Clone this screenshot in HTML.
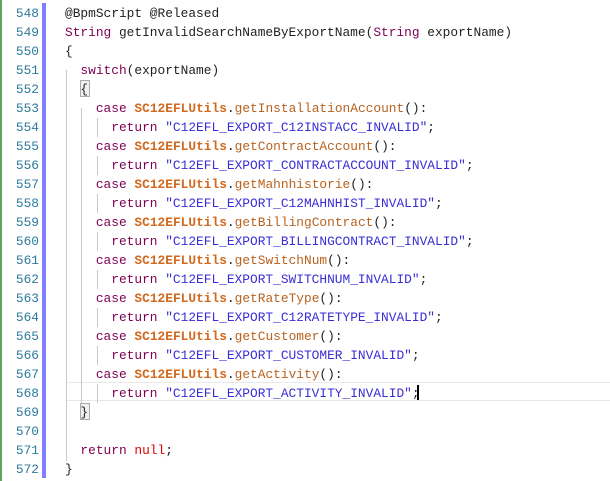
<!DOCTYPE html>
<html><head><meta charset="utf-8"><style>
body{margin:0;width:610px;height:481px;background:#fff;overflow:hidden;position:relative;font-family:"Liberation Mono",monospace;font-size:12.85px}
.g{position:absolute;left:0;top:0;width:2px;height:481px;background:#5fa35f}
.b{position:absolute;left:42px;top:3px;width:4px;height:475px;background:#8080ff}
.l{position:absolute;left:0;height:19px;line-height:19px;width:610px;white-space:pre}
.n{position:absolute;left:0;width:39px;text-align:right;color:#2b7a9a}
.c{position:absolute;left:65px;color:#222}
.k{color:#7f0055}.s{color:#2a00ff;color:#3a2dd6}.cl{color:#d2691e;font-weight:bold}.m{color:#b8621e}.nu{color:#e00000}
.ig{position:absolute;width:1px;background:#c8c8c8}
.hl{position:absolute;left:66px;top:382px;width:544px;height:19px;border-top:1px solid #e8e8e8;border-bottom:1px solid #e8e8e8;box-sizing:border-box}
.br{position:absolute;width:10px;height:17px;border:1px solid #aaa;background:#eef1ee;box-sizing:border-box}
.cur{position:absolute;left:417px;top:385px;width:2px;height:15px;background:#000}
</style></head><body>
<div class="g"></div><div class="b"></div>
<div class="hl"></div>
<div class="ig" style="left:66px;top:70px;height:391px"></div>
<div class="ig" style="left:81px;top:108px;height:296px"></div>
<div class="ig" style="left:97px;top:118px;height:19px"></div>
<div class="ig" style="left:97px;top:156px;height:19px"></div>
<div class="ig" style="left:97px;top:194px;height:19px"></div>
<div class="ig" style="left:97px;top:232px;height:19px"></div>
<div class="ig" style="left:97px;top:270px;height:19px"></div>
<div class="ig" style="left:97px;top:308px;height:19px"></div>
<div class="ig" style="left:97px;top:346px;height:19px"></div>
<div class="ig" style="left:97px;top:384px;height:19px"></div>
<div class="br" style="left:80px;top:80px"></div>
<div class="br" style="left:80px;top:403px"></div>
<div class="l" style="top:4px"><span class="n">548</span><span class="c">@BpmScript @Released</span></div>
<div class="l" style="top:23px"><span class="n">549</span><span class="c"><span class="k">String</span> getInvalidSearchNameByExportName(<span class="k">String</span> exportName)</span></div>
<div class="l" style="top:42px"><span class="n">550</span><span class="c">{</span></div>
<div class="l" style="top:61px"><span class="n">551</span><span class="c">  <span class="k">switch</span>(exportName)</span></div>
<div class="l" style="top:80px"><span class="n">552</span><span class="c">  {</span></div>
<div class="l" style="top:99px"><span class="n">553</span><span class="c">    <span class="k">case</span> <span class="cl">SC12EFLUtils</span>.<span class="m">getInstallationAccount</span>():</span></div>
<div class="l" style="top:118px"><span class="n">554</span><span class="c">      <span class="k">return</span> <span class="s">"C12EFL_EXPORT_C12INSTACC_INVALID"</span>;</span></div>
<div class="l" style="top:137px"><span class="n">555</span><span class="c">    <span class="k">case</span> <span class="cl">SC12EFLUtils</span>.<span class="m">getContractAccount</span>():</span></div>
<div class="l" style="top:156px"><span class="n">556</span><span class="c">      <span class="k">return</span> <span class="s">"C12EFL_EXPORT_CONTRACTACCOUNT_INVALID"</span>;</span></div>
<div class="l" style="top:175px"><span class="n">557</span><span class="c">    <span class="k">case</span> <span class="cl">SC12EFLUtils</span>.<span class="m">getMahnhistorie</span>():</span></div>
<div class="l" style="top:194px"><span class="n">558</span><span class="c">      <span class="k">return</span> <span class="s">"C12EFL_EXPORT_C12MAHNHIST_INVALID"</span>;</span></div>
<div class="l" style="top:213px"><span class="n">559</span><span class="c">    <span class="k">case</span> <span class="cl">SC12EFLUtils</span>.<span class="m">getBillingContract</span>():</span></div>
<div class="l" style="top:232px"><span class="n">560</span><span class="c">      <span class="k">return</span> <span class="s">"C12EFL_EXPORT_BILLINGCONTRACT_INVALID"</span>;</span></div>
<div class="l" style="top:251px"><span class="n">561</span><span class="c">    <span class="k">case</span> <span class="cl">SC12EFLUtils</span>.<span class="m">getSwitchNum</span>():</span></div>
<div class="l" style="top:270px"><span class="n">562</span><span class="c">      <span class="k">return</span> <span class="s">"C12EFL_EXPORT_SWITCHNUM_INVALID"</span>;</span></div>
<div class="l" style="top:289px"><span class="n">563</span><span class="c">    <span class="k">case</span> <span class="cl">SC12EFLUtils</span>.<span class="m">getRateType</span>():</span></div>
<div class="l" style="top:308px"><span class="n">564</span><span class="c">      <span class="k">return</span> <span class="s">"C12EFL_EXPORT_C12RATETYPE_INVALID"</span>;</span></div>
<div class="l" style="top:327px"><span class="n">565</span><span class="c">    <span class="k">case</span> <span class="cl">SC12EFLUtils</span>.<span class="m">getCustomer</span>():</span></div>
<div class="l" style="top:346px"><span class="n">566</span><span class="c">      <span class="k">return</span> <span class="s">"C12EFL_EXPORT_CUSTOMER_INVALID"</span>;</span></div>
<div class="l" style="top:365px"><span class="n">567</span><span class="c">    <span class="k">case</span> <span class="cl">SC12EFLUtils</span>.<span class="m">getActivity</span>():</span></div>
<div class="l" style="top:384px"><span class="n">568</span><span class="c">      <span class="k">return</span> <span class="s">"C12EFL_EXPORT_ACTIVITY_INVALID"</span>;</span></div>
<div class="l" style="top:403px"><span class="n">569</span><span class="c">  }</span></div>
<div class="l" style="top:422px"><span class="n">570</span><span class="c"></span></div>
<div class="l" style="top:441px"><span class="n">571</span><span class="c">  <span class="k">return</span> <span class="nu">null</span>;</span></div>
<div class="l" style="top:460px"><span class="n">572</span><span class="c">}</span></div>
<div class="cur"></div>
</body></html>
